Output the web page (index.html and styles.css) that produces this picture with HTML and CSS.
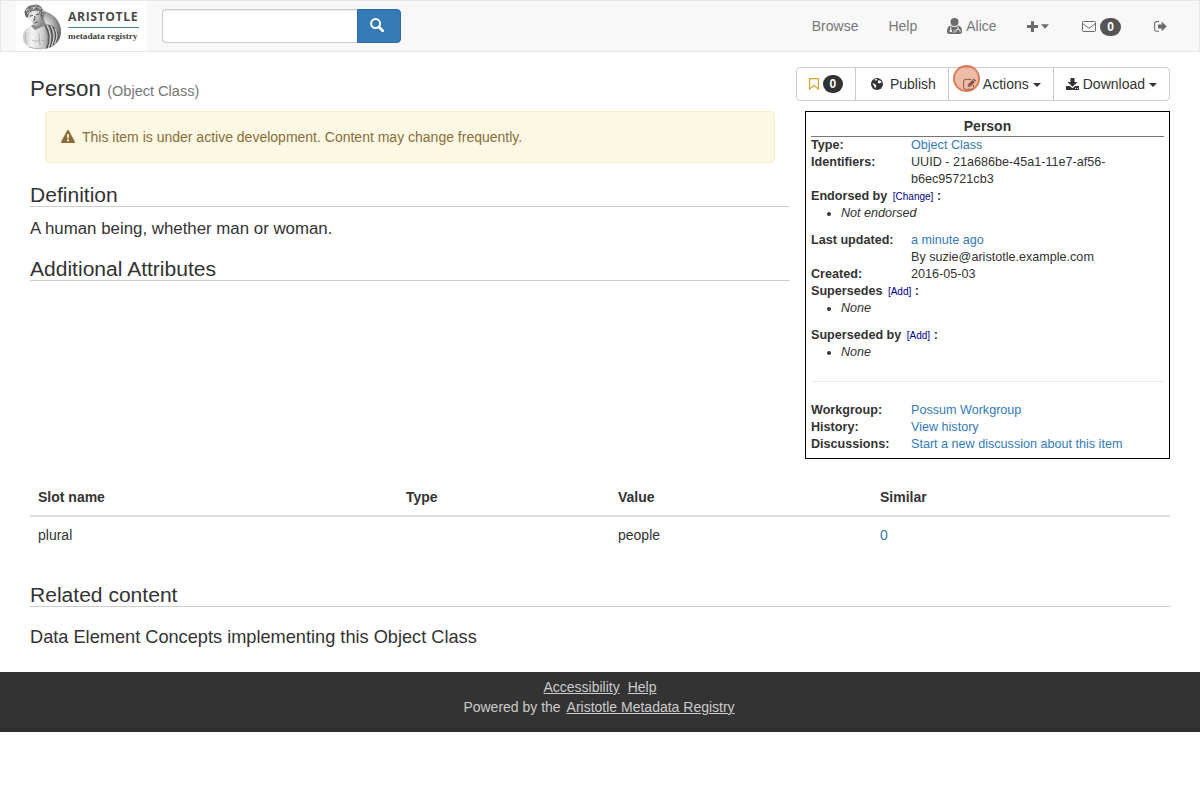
FILE: index.html
```html
<!DOCTYPE html>
<html lang="en">
<head>
<meta charset="utf-8">
<title>Person - Aristotle Metadata Registry</title>
<link rel="stylesheet" href="styles.css">
</head>
<body>
<nav class="navbar">
  <a class="brand">
    <svg class="bust" width="42" height="48" viewBox="0 0 42 48">
      <defs>
        <linearGradient id="stone" x1="0" x2="1"><stop offset="0" stop-color="#c8c8c8"/><stop offset=".3" stop-color="#f4f4f4"/><stop offset=".65" stop-color="#d0d0d0"/><stop offset="1" stop-color="#777"/></linearGradient>
        <linearGradient id="face" x1="0" x2="1" y1="0" y2=".4"><stop offset="0" stop-color="#999"/><stop offset=".4" stop-color="#f2f2f2"/><stop offset="1" stop-color="#999"/></linearGradient>
        <radialGradient id="halo" cx=".35" cy=".5" r=".65"><stop offset=".3" stop-color="#ddd"/><stop offset="1" stop-color="#666"/></radialGradient>
      </defs>
      <path d="M22 8Q32 11 36 18Q41 26 38 35Q35 42 27 45L14 26Z" fill="url(#halo)"/>
      <path d="M11 22Q4 25 2 29Q-1 37 4 42Q10 48 22 46Q28 45 29 38L31 24L20 18Z" fill="url(#stone)"/>
      <path d="M9 23L13 27L24 22L21 14Z" fill="#8a8a8a"/>
      <path d="M4 30q-2 6 1 11M10 37q4 3 8 0M19 37q4 2 6 0M17 30l1 13M7 44q7 3 14 1" fill="none" stroke="#aaa" stroke-width=".8"/>
      <path d="M22 22Q29 20 35 25Q40 31 34 40Q30 45 23 46Q28 36 22 22Z" fill="#8c8c8c"/>
      <path d="M23 22Q30 34 25 45M27 22Q33 32 28 44M31 24Q36 32 31 42M35 28Q38 33 34 39" fill="none" stroke="#3d3d3d" stroke-width=".9"/>
      <path d="M25 22Q31 33 26.5 45M29 23Q35 32 29.5 43M33 26Q37 32 32.5 41" fill="none" stroke="#ddd" stroke-width=".9"/>
      <path d="M6 9Q6 14 8.5 18Q11 23 15 23Q19 22 20 17Q22 12 19 6L12 4Z" fill="url(#face)"/>
      <path d="M4 14Q1 9 4 6Q6 2 11 2Q17 0 20 5Q24 9 21 16L19.5 17L17 8Q11 7 7 10L6 15Z" fill="#7a7a7a"/>
      <path d="M4 8q2-3 4-1q1-4 4-2q3-3 5 0q3 0 4 4M5 11l3-3M11 7l2-3M18 9l3 3" fill="none" stroke="#ddd" stroke-width=".8"/>
      <path d="M3 8q2 2 2 6M7 8l2-4M14 6l2-3M19 6l1 7" fill="none" stroke="#444" stroke-width=".7"/>
      <path d="M8 13.2l3-1M14 11.8l3.5-1M12.7 13l.2 4-1.7.3M12 20l4-1.2" fill="none" stroke="#444" stroke-width=".9"/>
    </svg>
    <span class="brand-text"><b>ARISTOTLE</b><i></i><span>metadata registry</span></span>
  </a>
  <form class="search">
    <input type="text" aria-label="Search">
    <button type="button" aria-label="Search"><svg width="14" height="14" viewBox="0 0 14 14" fill="none" stroke="#fff"><circle cx="5.6" cy="5.6" r="4.5" stroke-width="2"/><path d="M9 9l3.7 3.7" stroke-width="2.7" stroke-linecap="round"/></svg></button>
  </form>
  <div class="nav-links">
    <a>Browse</a>
    <a>Help</a>
    <a><svg class="ic-user" width="15" height="16" viewBox="0 0 15 16"><circle cx="7.5" cy="4" r="4" fill="#6b6b6b"/><path d="M3.5 7.5Q0 8.5 0 13.5Q0 16 2.5 16H12.5Q15 16 15 13.5Q15 8.5 11.5 7.5Q7.5 10.5 3.5 7.5Z" fill="#6b6b6b"/><path d="M3.8 8.5v4M11 8.5v2.5M8.9 14.2v-1q0-2 2.1-2t2.1 2v1" fill="none" stroke="#f8f8f8" stroke-width="1"/><circle cx="3.8" cy="13" r="1.2" fill="#f8f8f8"/><path d="M7.4 10.5L5.4 15h3z" fill="#f8f8f8" opacity=".4"/></svg>Alice</a>
    <a class="plus"><svg width="11" height="11" viewBox="0 0 11 11"><path d="M4 .3h3V4h4v3H7v4H4V7H0V4h4z" fill="#6b6b6b"/></svg><svg class="nav-caret" width="8" height="5" viewBox="0 0 8 5"><path d="M0 .3h8L4 4.7z" fill="#6b6b6b"/></svg></a>
    <a class="mail"><svg width="14" height="11" viewBox="0 0 14 11" fill="none" stroke="#6b6b6b"><rect x=".5" y=".5" width="13" height="10" rx="1"/><path d="M.7 2.5L6 6.7q1 .8 2 0l5.3-4.2"/></svg><span class="badge">0</span></a>
    <a class="logout"><svg width="13" height="11" viewBox="0 0 13 11"><path d="M5 .6H2.5Q.6.6.6 2.5v5.8q0 1.9 1.9 1.9H5" fill="none" stroke="#6b6b6b" stroke-width="1.1"/><path d="M4 3.5h3.7V.6L12.8 5.4L7.7 10.3V7.5H4z" fill="#6b6b6b"/></svg></a>
  </div>
</nav>

<main class="page">
  <header class="title-row">
    <h1>Person <small>(Object Class)</small></h1>
    <div class="btn-group">
      <a class="btn"><svg width="10" height="12" viewBox="0 0 10 12"><path d="M.6.6h8.8v10.6L5 7.2L.6 11.2z" fill="none" stroke="#dea52c" stroke-width="1.2"/></svg><span class="badge">0</span></a>
      <a class="btn publish"><svg width="12" height="12" viewBox="0 0 12 12"><circle cx="6" cy="6" r="6" fill="#333"/><path d="M3 1.8L5.4 1l1 .8L5 2.8zM7.2 2l2.3.8 1.3 2.4-1.4-.5-1.4.8-1.6-1 .8-1.1zM1.3 5l2.5 1 1.6 1.4-.5 1.5-.8 1.6-1-2.6z" fill="#fff"/></svg>Publish</a>
      <a class="btn actions"><svg width="14" height="12" viewBox="0 0 14 12"><path d="M10.5 7v2.5q0 1.8-1.8 1.8H2.4Q.6 11.3.6 9.5V3.2q0-1.8 1.8-1.8h6" fill="none" stroke="#333"/><path d="M4.8 9V6.6L10.9.5l2.3 2.3L7.1 9z" fill="#333"/><path d="M5.5 7.2l1.1 1.1M9.7 1.8L12 4.1" stroke="#fff" stroke-width=".7"/></svg>Actions<i class="caret"></i><span class="click-marker"></span></a>
      <a class="btn download"><svg width="13" height="12" viewBox="0 0 13 12"><path d="M4.5 0h4v4h3L6.5 8.7 1.5 4h3z" fill="#333"/><path d="M0 8h3.7l2.8 2.2L9.3 8H13v4H0z" fill="#333"/><path d="M9 10.4h.9M11 10.4h.9" stroke="#fff"/></svg>Download<i class="caret"></i></a>
    </div>
  </header>

  <div class="columns">
    <section class="content">
      <div class="alert"><svg width="14" height="13" viewBox="0 0 14 13"><path d="M7 0q.6 0 1 .7l5.8 10.8q.6 1.5-.8 1.5H1q-1.4 0-.8-1.5L6 .7Q6.4 0 7 0z" fill="#8a6d3b"/><path d="M6 4.3h2L7.7 8.4H6.3zM6 9.5h2v1.8H6z" fill="#fcf8e3"/></svg>This item is under active development. Content may change frequently.</div>
      <h2>Definition</h2>
      <p class="lead">A human being, whether man or woman.</p>
      <h2>Additional Attributes</h2>
    </section>
    <aside class="infobox">
      <h3>Person</h3>
      <dl>
        <dt>Type:</dt><dd><a>Object Class</a></dd>
        <dt>Identifiers:</dt><dd>UUID - 21a686be-45a1-11e7-af56-b6ec95721cb3</dd>
      </dl>
      <div class="group"><b>Endorsed by</b> <small>[Change]</small> <b>:</b></div>
      <ul><li>Not endorsed</li></ul>
      <dl>
        <dt>Last updated:</dt><dd><a>a minute ago</a><br>By suzie@aristotle.example.com</dd>
        <dt>Created:</dt><dd>2016-05-03</dd>
      </dl>
      <div class="group"><b>Supersedes</b> <small>[Add]</small> <b>:</b></div>
      <ul><li>None</li></ul>
      <div class="group"><b>Superseded by</b> <small>[Add]</small> <b>:</b></div>
      <ul><li>None</li></ul>
      <hr>
      <dl>
        <dt>Workgroup:</dt><dd><a>Possum Workgroup</a></dd>
        <dt>History:</dt><dd><a>View history</a></dd>
        <dt>Discussions:</dt><dd><a>Start a new discussion about this item</a></dd>
      </dl>
    </aside>
  </div>

  <table class="slots">
    <thead><tr><th class="c-name">Slot name</th><th class="c-type">Type</th><th class="c-value">Value</th><th>Similar</th></tr></thead>
    <tbody><tr><td>plural</td><td></td><td>people</td><td><a>0</a></td></tr></tbody>
  </table>

  <h2 class="related">Related content</h2>
  <h4>Data Element Concepts implementing this Object Class</h4>
</main>

<footer class="footer">
  <div><a>Accessibility</a><a class="help">Help</a></div>
  <div>Powered by the <a class="registry">Aristotle Metadata Registry</a></div>
</footer>
</body>
</html>
```
FILE: styles.css
```css
* { box-sizing: border-box; }
body { margin: 0; background: #fff; color: #333; font: 14px/20px "Liberation Sans", Arial, sans-serif; }
svg { display: block; flex: none; }
h1, h2, h3, h4, p, dl, dd, ul { margin: 0; padding: 0; }

.navbar { height: 52px; display: flex; align-items: flex-start; background: #f8f8f8; border: 1px solid #e7e7e7; padding-left: 15px; }
.brand { width: 131px; height: 50px; background: #fff; display: flex; padding: 2px 0 0 6px; }
.brand-text { display: flex; flex-direction: column; width: 71px; margin-left: 4px; padding-top: 6px; white-space: nowrap; }
.brand-text b { font: 700 12.2px/16px "Open Sans", sans-serif; letter-spacing: .6px; color: #4a4a4a; }
.brand-text i { height: 1px; background: #4b8580; margin-top: 2px; }
.brand-text span { font: bold 9.2px/14px "Liberation Serif", serif; color: #444; margin-top: 1px; }
.search { display: flex; margin: 8px 0 0 15px; }
.search input { width: 196px; height: 34px; border: 1px solid #ccc; border-right: 0; border-radius: 4px 0 0 4px; box-shadow: inset 0 1px 1px rgba(0,0,0,.075); background: #fff; }
.search button { width: 44px; height: 34px; margin-left: -1px; background: #337ab7; border: 1px solid #2e6da4; border-radius: 0 4px 4px 0; padding: 0 0 2px 12px; }
.nav-links { margin-left: auto; display: flex; padding-right: 32px; height: 50px; color: #777; }
.nav-links a { display: flex; align-items: center; margin-left: 30px; }
.ic-user { margin-right: 4px; }
.nav-caret { margin-left: 3px; }
.nav-links .plus { margin-left: 30.7px; }
.nav-links .mail { margin-left: 33px; }
.nav-links .mail .badge { margin-top: 1px; }
.nav-links .logout { margin-left: 33px; }
.badge { display: block; min-width: 20px; height: 18px; padding: 3px 7px; margin-left: 4px; border-radius: 10px; background: #555; color: #fff; font-size: 12px; line-height: 12px; font-weight: bold; }

.page { padding: 15px 30px 0; }
.title-row { display: flex; justify-content: space-between; }
h1 { font-size: 22.4px; line-height: 24px; font-weight: 400; padding-top: 10px; }
h1 small { font-size: 14.56px; color: #777; }
.btn-group { display: flex; height: 34px; border: 1px solid #ccc; border-radius: 4px; }
.btn { position: relative; display: flex; align-items: center; padding: 0 12px; }
.btn + .btn { border-left: 1px solid #ccc; }
.btn .badge { width: 20px; padding: 3px 0; text-align: center; background: #333; }
.publish { padding-left: 15px; }
.publish svg { margin-right: 7px; }
.actions { padding-left: 14px; }
.actions svg { margin-right: 6px; }
.download svg { margin-right: 4px; }
.caret { border: 4px solid transparent; border-top-color: #333; border-bottom: 0; margin: 2px 0 0 4px; }
.click-marker { position: absolute; left: 4px; top: -3px; width: 27px; height: 27px; border: 2px solid rgba(216,103,61,.75); border-radius: 50%; background: rgba(224,125,91,.52); }

.columns { display: grid; grid-template-columns: 760px 365px; gap: 15px; padding-top: 10px; margin-top: -2px; height: 358px; align-items: start; }
.title-row { height: 36px; align-items: flex-start; }
.alert { display: flex; align-items: center; height: 52px; margin: 0 15px; padding: 0 15px; border: 1px solid #faebcc; border-radius: 4px; background: #fcf8e3; color: #8a6d3b; }
.alert svg { margin: 0 7px 2px 0; }
h2 { font-size: 21.05px; line-height: 23px; font-weight: 400; border-bottom: 1px solid #ccc; margin-top: 20px; height: 24px; }
.lead { font-size: 16.85px; line-height: 24px; margin: 10px 0 16px; }
.lead + h2 { margin-top: 0; }
.infobox { height: 348px; border: 1px solid #000; padding: 5px; font-size: 12.6px; line-height: 17px; }
.infobox h3 { height: 20px; font-size: 14px; line-height: 19px; text-align: center; border-bottom: 1px solid #777; }
.infobox dl { display: grid; grid-template-columns: 100px 210px; }
.infobox dl:last-child { grid-template-columns: 100px 1fr; }
dt { font-weight: bold; }
dd a, td a { color: #337ab7; }
.group { height: 17px; }
.group small { font-size: 10px; color: #00008b; margin: 0 0 0 2px; }
.infobox ul { padding-left: 30px; margin-bottom: 10px; }
.infobox li { font-style: italic; }
hr { border: 0; border-top: 1px solid #eee; margin: 20px 0; }

.slots { width: 1140px; margin-top: 19px; border-collapse: collapse; table-layout: fixed; }
.slots th { height: 38px; padding: 8px; text-align: left; border-bottom: 2px solid #ddd; }
.slots td { height: 37px; padding: 8px; }
.c-name { width: 368px; }
.c-type { width: 212px; }
.c-value { width: 262px; }
.related { margin-top: 30px; }
h4 { font-size: 18.2px; line-height: 20px; font-weight: 400; margin: 20px 0 25px; }
.footer { height: 60px; padding-top: 5px; background: #333; border-bottom: 4px solid #2f2e2e; color: #ccc; text-align: center; }
.footer a { color: #ccc; text-decoration: underline; }
.footer .help { margin-left: 8px; }
.footer .registry { margin: 0 2px; }
```
